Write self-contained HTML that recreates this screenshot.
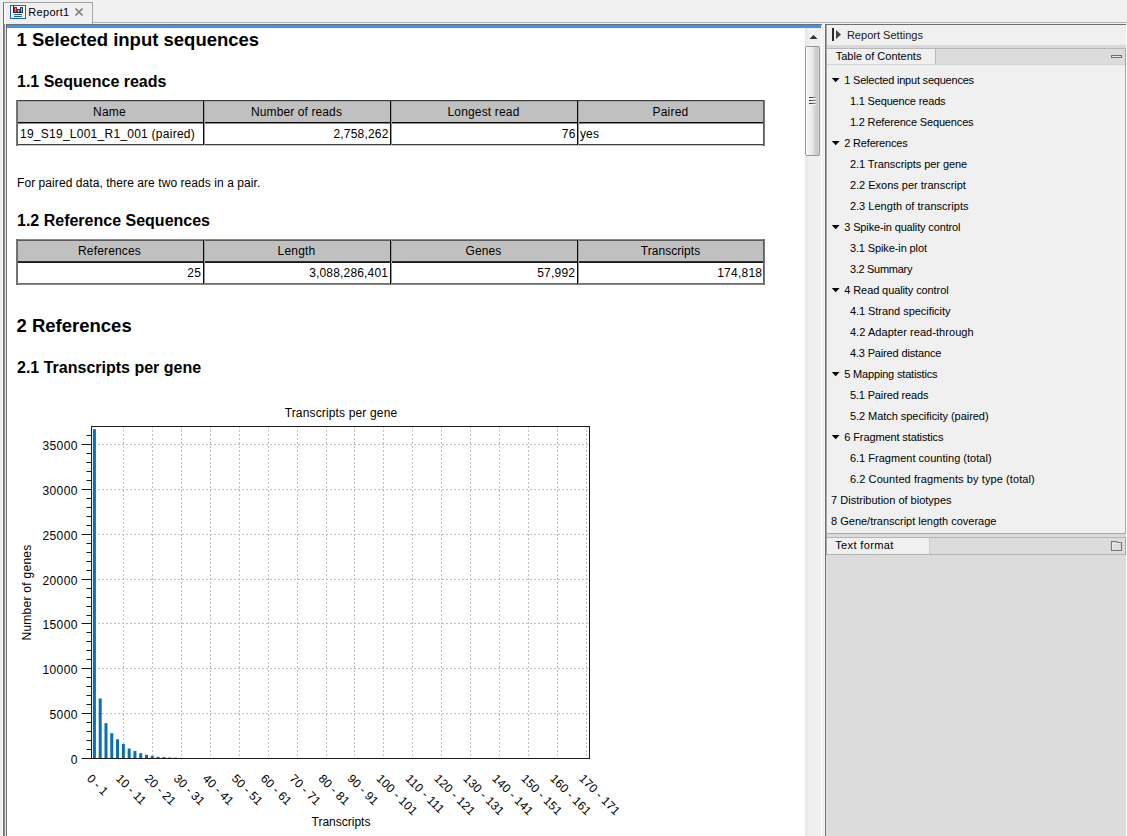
<!DOCTYPE html>
<html><head><meta charset="utf-8">
<style>
*{margin:0;padding:0;box-sizing:border-box}
html,body{width:1127px;height:836px;overflow:hidden;background:#f0f0f0;font-family:"Liberation Sans",sans-serif;position:relative}
.a{position:absolute}
.t{position:absolute;white-space:nowrap;line-height:1}
svg{position:absolute;left:0;top:0}
</style></head><body>
<div class="a" style="left:93px;top:22px;width:1034px;height:1px;background:#b4b4b4;"></div>
<div class="a" style="left:3px;top:2px;width:90px;height:22px;background:#f0f0f0;border-top:1px solid #a0a0a0;border-left:1px solid #6e6e6e;border-right:1px solid #a8a8a8"></div>
<div class="a" style="left:4px;top:3px;width:1px;height:21px;background:#fafafa;"></div>
<svg width="1127" height="30" style="left:0;top:0" shape-rendering="crispEdges">
<rect x="10" y="5" width="16" height="14" fill="#1e62b2"/>
<rect x="11" y="6" width="14" height="12" fill="#f6faff"/>
<rect x="13" y="6" width="1" height="7" fill="#26245e"/>
<rect x="13" y="12" width="10" height="1" fill="#26245e"/>
<rect x="14" y="7" width="3" height="5" fill="#b01e18"/>
<rect x="15" y="8" width="1" height="4" fill="#f07a64"/>
<rect x="17" y="9" width="3" height="3" fill="#0e7a12"/>
<rect x="18" y="10" width="1" height="2" fill="#90f070"/>
<rect x="20" y="7" width="3" height="5" fill="#1c3c98"/>
<rect x="21" y="8" width="1" height="4" fill="#78a8e8"/>
<rect x="14" y="14" width="8" height="1" fill="#1a62b4"/>
<rect x="14" y="16" width="8" height="1" fill="#1a62b4"/>
</svg>
<svg width="1127" height="30" style="left:0;top:0">
<path d="M75.5 8.5 L82.5 15.5 M82.5 8.5 L75.5 15.5" stroke="#7a7a7a" stroke-width="1.6"/>
</svg>
<div class="t" style="top:6.69px;font-size:11px;color:#000;letter-spacing:0.3px;left:28.30px;">Report1</div>
<div class="a" style="left:2px;top:24px;width:1px;height:812px;background:#f8f8f8;"></div>
<div class="a" style="left:3px;top:24px;width:1px;height:812px;background:#6e6e6e;"></div>
<div class="a" style="left:4px;top:24px;width:1px;height:812px;background:#8c8c8c;"></div>
<div class="a" style="left:5px;top:24px;width:1px;height:812px;background:#e4e4e4;"></div>
<div class="a" style="left:6px;top:24px;width:816px;height:1px;background:#6e6e6e;"></div>
<div class="a" style="left:6px;top:24px;width:1px;height:812px;background:#6e6e6e;"></div>
<div class="a" style="left:7px;top:25px;width:814px;height:3px;background:#3797f7;"></div>
<div class="a" style="left:2px;top:22px;width:1px;height:2px;background:#f0f0f0;"></div>
<div class="a" style="left:7px;top:28px;width:798px;height:808px;background:#ffffff;"></div>
<div class="a" style="left:805px;top:28px;width:15px;height:808px;background:linear-gradient(to right,#e6e6e6,#f0f0f0 30%,#f0f0f0);"></div>
<div class="a" style="left:820px;top:28px;width:5px;height:808px;background:#f0f0f0;"></div>
<div class="a" style="left:821px;top:28px;width:1px;height:808px;background:#ffffff;"></div>
<div class="a" style="left:824px;top:25px;width:1px;height:811px;background:#f8f8f8;"></div>
<div class="a" style="left:805px;top:46px;width:15px;height:110px;background:linear-gradient(to right,#f6f6f6 0%,#ececee 45%,#d2d2d6 70%,#c8c8cc 90%,#dcdcdc 100%);border:1px solid #959595;border-radius:2px"></div>
<div class="a" style="left:806px;top:47px;width:1px;height:108px;background:#fbfbfb;"></div>
<div class="a" style="left:809px;top:97px;width:7px;height:1px;background:linear-gradient(to right,#303030,#606060 50%,#a0a0a0);"></div>
<div class="a" style="left:809px;top:98px;width:7px;height:1px;background:#f6f6f6;"></div>
<div class="a" style="left:809px;top:100px;width:7px;height:1px;background:linear-gradient(to right,#303030,#606060 50%,#a0a0a0);"></div>
<div class="a" style="left:809px;top:101px;width:7px;height:1px;background:#f6f6f6;"></div>
<div class="a" style="left:809px;top:103px;width:7px;height:1px;background:linear-gradient(to right,#303030,#606060 50%,#a0a0a0);"></div>
<div class="a" style="left:809px;top:104px;width:7px;height:1px;background:#f6f6f6;"></div>
<div class="t" style="top:31.14px;font-size:18.5px;color:#000;font-weight:bold;left:16.50px;">1 Selected input sequences</div>
<div class="t" style="top:74.36px;font-size:16px;color:#000;font-weight:bold;left:17.00px;">1.1 Sequence reads</div>
<div class="t" style="top:176.54px;font-size:12px;color:#000;letter-spacing:0.068px;left:17.00px;">For paired data, there are two reads in a pair.</div>
<div class="t" style="top:213.16px;font-size:16px;color:#000;font-weight:bold;left:17.00px;">1.2 Reference Sequences</div>
<div class="t" style="top:317.44px;font-size:18.5px;color:#000;font-weight:bold;left:16.50px;">2 References</div>
<div class="t" style="top:360.46px;font-size:16px;color:#000;font-weight:bold;left:17.00px;">2.1 Transcripts per gene</div>
<div class="a" style="left:17px;top:101px;width:747px;height:21px;background:#c0c0c0;"></div>
<div class="a" style="left:17px;top:123px;width:747px;height:21px;background:#ffffff;"></div>
<div class="a" style="left:16px;top:100px;width:749px;height:1px;background:#3c3c3c;"></div>
<div class="a" style="left:16px;top:101px;width:749px;height:1px;background:#a8a8a8;"></div>
<div class="a" style="left:16px;top:144px;width:749px;height:1px;background:#404040;"></div>
<div class="a" style="left:16px;top:145px;width:749px;height:1px;background:#c4c4c4;"></div>
<div class="a" style="left:17px;top:122px;width:747px;height:1px;background:#0a0a0a;"></div>
<div class="a" style="left:17px;top:123px;width:747px;height:1px;background:#8c8c8c;"></div>
<div class="a" style="left:16px;top:100px;width:1px;height:46px;background:#767676;"></div>
<div class="a" style="left:17px;top:100px;width:1px;height:46px;background:#6a6a6a;"></div>
<div class="a" style="left:763px;top:100px;width:1px;height:46px;background:#606060;"></div>
<div class="a" style="left:764px;top:100px;width:1px;height:46px;background:#787878;"></div>
<div class="a" style="left:203px;top:101px;width:1px;height:44px;background:#0a0a0a;"></div>
<div class="a" style="left:204px;top:101px;width:1px;height:44px;background:#9a9a9a;"></div>
<div class="a" style="left:390px;top:101px;width:1px;height:44px;background:#0a0a0a;"></div>
<div class="a" style="left:391px;top:101px;width:1px;height:44px;background:#9a9a9a;"></div>
<div class="a" style="left:577px;top:101px;width:1px;height:44px;background:#0a0a0a;"></div>
<div class="a" style="left:578px;top:101px;width:1px;height:44px;background:#9a9a9a;"></div>
<div class="t" style="top:105.84px;font-size:12px;color:#000;letter-spacing:0.248px;left:-190.50px;width:600px;text-align:center;">Name</div>
<div class="t" style="top:105.84px;font-size:12px;color:#000;letter-spacing:0.108px;left:-3.50px;width:600px;text-align:center;">Number of reads</div>
<div class="t" style="top:105.84px;font-size:12px;color:#000;letter-spacing:0.162px;left:183.50px;width:600px;text-align:center;">Longest read</div>
<div class="t" style="top:105.84px;font-size:12px;color:#000;letter-spacing:0.219px;left:370.50px;width:600px;text-align:center;">Paired</div>
<div class="t" style="top:127.84px;font-size:12px;color:#000;letter-spacing:0.254px;left:20.00px;">19_S19_L001_R1_001 (paired)</div>
<div class="t" style="top:127.84px;font-size:12px;color:#000;letter-spacing:0.179px;right:738.52px;">2,758,262</div>
<div class="t" style="top:127.84px;font-size:12px;color:#000;letter-spacing:0.326px;right:551.37px;">76</div>
<div class="t" style="top:127.84px;font-size:12px;color:#000;letter-spacing:0.109px;left:580.00px;">yes</div>
<div class="a" style="left:17px;top:241px;width:747px;height:21px;background:#c0c0c0;"></div>
<div class="a" style="left:17px;top:263px;width:747px;height:21px;background:#ffffff;"></div>
<div class="a" style="left:16px;top:239px;width:749px;height:1px;background:#8a8a8a;"></div>
<div class="a" style="left:16px;top:240px;width:749px;height:1px;background:#5c5c5c;"></div>
<div class="a" style="left:16px;top:283px;width:749px;height:1px;background:#707070;"></div>
<div class="a" style="left:16px;top:284px;width:749px;height:1px;background:#858585;"></div>
<div class="a" style="left:17px;top:261px;width:747px;height:1px;background:#303030;"></div>
<div class="a" style="left:17px;top:262px;width:747px;height:1px;background:#1a1a1a;"></div>
<div class="a" style="left:16px;top:239px;width:1px;height:46px;background:#767676;"></div>
<div class="a" style="left:17px;top:239px;width:1px;height:46px;background:#6a6a6a;"></div>
<div class="a" style="left:763px;top:239px;width:1px;height:46px;background:#606060;"></div>
<div class="a" style="left:764px;top:239px;width:1px;height:46px;background:#787878;"></div>
<div class="a" style="left:203px;top:240px;width:1px;height:44px;background:#0a0a0a;"></div>
<div class="a" style="left:204px;top:240px;width:1px;height:44px;background:#9a9a9a;"></div>
<div class="a" style="left:390px;top:240px;width:1px;height:44px;background:#0a0a0a;"></div>
<div class="a" style="left:391px;top:240px;width:1px;height:44px;background:#9a9a9a;"></div>
<div class="a" style="left:577px;top:240px;width:1px;height:44px;background:#0a0a0a;"></div>
<div class="a" style="left:578px;top:240px;width:1px;height:44px;background:#9a9a9a;"></div>
<div class="t" style="top:245.24px;font-size:12px;color:#000;letter-spacing:0.163px;left:-190.50px;width:600px;text-align:center;">References</div>
<div class="t" style="top:245.24px;font-size:12px;color:#000;letter-spacing:0.216px;left:-3.50px;width:600px;text-align:center;">Length</div>
<div class="t" style="top:245.24px;font-size:12px;color:#000;letter-spacing:0.129px;left:183.50px;width:600px;text-align:center;">Genes</div>
<div class="t" style="top:245.24px;font-size:12px;color:#000;letter-spacing:0.06px;left:370.50px;width:600px;text-align:center;">Transcripts</div>
<div class="t" style="top:267.24px;font-size:12px;color:#000;letter-spacing:0.326px;right:925.67px;">25</div>
<div class="t" style="top:267.24px;font-size:12px;color:#000;letter-spacing:0.174px;right:738.83px;">3,088,286,401</div>
<div class="t" style="top:267.24px;font-size:12px;color:#000;letter-spacing:0.216px;right:551.78px;">57,992</div>
<div class="t" style="top:267.24px;font-size:12px;color:#000;letter-spacing:0.232px;right:364.77px;">174,818</div>
<svg width="1127" height="836" style="left:0;top:0" font-family="Liberation Sans">
<line x1="123.5" y1="426" x2="123.5" y2="758.5" stroke="#c0c0c0" stroke-width="1" stroke-dasharray="2,2"/>
<line x1="152.5" y1="426" x2="152.5" y2="758.5" stroke="#c0c0c0" stroke-width="1" stroke-dasharray="2,2"/>
<line x1="181.5" y1="426" x2="181.5" y2="758.5" stroke="#c0c0c0" stroke-width="1" stroke-dasharray="2,2"/>
<line x1="210.5" y1="426" x2="210.5" y2="758.5" stroke="#c0c0c0" stroke-width="1" stroke-dasharray="2,2"/>
<line x1="239.5" y1="426" x2="239.5" y2="758.5" stroke="#c0c0c0" stroke-width="1" stroke-dasharray="2,2"/>
<line x1="268.5" y1="426" x2="268.5" y2="758.5" stroke="#c0c0c0" stroke-width="1" stroke-dasharray="2,2"/>
<line x1="297.5" y1="426" x2="297.5" y2="758.5" stroke="#c0c0c0" stroke-width="1" stroke-dasharray="2,2"/>
<line x1="326.5" y1="426" x2="326.5" y2="758.5" stroke="#c0c0c0" stroke-width="1" stroke-dasharray="2,2"/>
<line x1="354.5" y1="426" x2="354.5" y2="758.5" stroke="#c0c0c0" stroke-width="1" stroke-dasharray="2,2"/>
<line x1="383.5" y1="426" x2="383.5" y2="758.5" stroke="#c0c0c0" stroke-width="1" stroke-dasharray="2,2"/>
<line x1="412.5" y1="426" x2="412.5" y2="758.5" stroke="#c0c0c0" stroke-width="1" stroke-dasharray="2,2"/>
<line x1="441.5" y1="426" x2="441.5" y2="758.5" stroke="#c0c0c0" stroke-width="1" stroke-dasharray="2,2"/>
<line x1="470.5" y1="426" x2="470.5" y2="758.5" stroke="#c0c0c0" stroke-width="1" stroke-dasharray="2,2"/>
<line x1="499.5" y1="426" x2="499.5" y2="758.5" stroke="#c0c0c0" stroke-width="1" stroke-dasharray="2,2"/>
<line x1="528.5" y1="426" x2="528.5" y2="758.5" stroke="#c0c0c0" stroke-width="1" stroke-dasharray="2,2"/>
<line x1="557.5" y1="426" x2="557.5" y2="758.5" stroke="#c0c0c0" stroke-width="1" stroke-dasharray="2,2"/>
<line x1="586.5" y1="426" x2="586.5" y2="758.5" stroke="#c0c0c0" stroke-width="1" stroke-dasharray="2,2"/>
<line x1="94" y1="713.5" x2="589.5" y2="713.5" stroke="#c0c0c0" stroke-width="1" stroke-dasharray="2,2"/>
<line x1="94" y1="668.5" x2="589.5" y2="668.5" stroke="#c0c0c0" stroke-width="1" stroke-dasharray="2,2"/>
<line x1="94" y1="623.5" x2="589.5" y2="623.5" stroke="#c0c0c0" stroke-width="1" stroke-dasharray="2,2"/>
<line x1="94" y1="579.5" x2="589.5" y2="579.5" stroke="#c0c0c0" stroke-width="1" stroke-dasharray="2,2"/>
<line x1="94" y1="534.5" x2="589.5" y2="534.5" stroke="#c0c0c0" stroke-width="1" stroke-dasharray="2,2"/>
<line x1="94" y1="489.5" x2="589.5" y2="489.5" stroke="#c0c0c0" stroke-width="1" stroke-dasharray="2,2"/>
<line x1="94" y1="444.5" x2="589.5" y2="444.5" stroke="#c0c0c0" stroke-width="1" stroke-dasharray="2,2"/>
<rect x="92.90" y="429.20" width="3" height="329.30" fill="#0a6eb4"/>
<rect x="98.69" y="698.50" width="3" height="60.00" fill="#0a6eb4"/>
<rect x="104.48" y="723.20" width="3" height="35.30" fill="#0a6eb4"/>
<rect x="110.27" y="733.20" width="3" height="25.30" fill="#0a6eb4"/>
<rect x="116.06" y="739.30" width="3" height="19.20" fill="#0a6eb4"/>
<rect x="121.85" y="744.00" width="3" height="14.50" fill="#0a6eb4"/>
<rect x="127.64" y="748.50" width="3" height="10.00" fill="#0a6eb4"/>
<rect x="133.43" y="751.00" width="3" height="7.50" fill="#0a6eb4"/>
<rect x="139.22" y="753.20" width="3" height="5.30" fill="#0a6eb4"/>
<rect x="145.01" y="754.80" width="3" height="3.70" fill="#0a6eb4"/>
<rect x="150.80" y="755.90" width="3" height="2.60" fill="#0a6eb4"/>
<rect x="156.59" y="756.80" width="3" height="1.70" fill="#0a6eb4"/>
<rect x="162.38" y="757.10" width="3" height="1.40" fill="#0a6eb4"/>
<rect x="168.17" y="757.50" width="3" height="1.00" fill="#0a6eb4"/>
<rect x="173.97" y="757.70" width="3" height="0.80" fill="#0a6eb4"/>
<rect x="179.76" y="757.90" width="3" height="0.60" fill="#0a6eb4"/>
<rect x="185.55" y="758.00" width="3" height="0.50" fill="#0a6eb4"/>
<rect x="191.34" y="758.10" width="3" height="0.40" fill="#0a6eb4"/>
<rect x="91.5" y="426.5" width="498.0" height="332.0" fill="none" stroke="#1a1a1a" stroke-width="1"/>
<line x1="81.5" y1="758.5" x2="91.5" y2="758.5" stroke="#1a1a1a" stroke-width="1"/>
<text x="77.8" y="763.80" font-size="12" text-anchor="end" letter-spacing="0.4">0</text>
<line x1="86.5" y1="749.5" x2="91.5" y2="749.5" stroke="#1a1a1a" stroke-width="1"/>
<line x1="86.5" y1="740.5" x2="91.5" y2="740.5" stroke="#1a1a1a" stroke-width="1"/>
<line x1="86.5" y1="731.5" x2="91.5" y2="731.5" stroke="#1a1a1a" stroke-width="1"/>
<line x1="86.5" y1="722.5" x2="91.5" y2="722.5" stroke="#1a1a1a" stroke-width="1"/>
<line x1="81.5" y1="713.5" x2="91.5" y2="713.5" stroke="#1a1a1a" stroke-width="1"/>
<text x="77.8" y="718.80" font-size="12" text-anchor="end" letter-spacing="0.4">5000</text>
<line x1="86.5" y1="704.5" x2="91.5" y2="704.5" stroke="#1a1a1a" stroke-width="1"/>
<line x1="86.5" y1="695.5" x2="91.5" y2="695.5" stroke="#1a1a1a" stroke-width="1"/>
<line x1="86.5" y1="686.5" x2="91.5" y2="686.5" stroke="#1a1a1a" stroke-width="1"/>
<line x1="86.5" y1="677.5" x2="91.5" y2="677.5" stroke="#1a1a1a" stroke-width="1"/>
<line x1="81.5" y1="668.5" x2="91.5" y2="668.5" stroke="#1a1a1a" stroke-width="1"/>
<text x="77.8" y="673.80" font-size="12" text-anchor="end" letter-spacing="0.4">10000</text>
<line x1="86.5" y1="659.5" x2="91.5" y2="659.5" stroke="#1a1a1a" stroke-width="1"/>
<line x1="86.5" y1="650.5" x2="91.5" y2="650.5" stroke="#1a1a1a" stroke-width="1"/>
<line x1="86.5" y1="641.5" x2="91.5" y2="641.5" stroke="#1a1a1a" stroke-width="1"/>
<line x1="86.5" y1="632.5" x2="91.5" y2="632.5" stroke="#1a1a1a" stroke-width="1"/>
<line x1="81.5" y1="623.5" x2="91.5" y2="623.5" stroke="#1a1a1a" stroke-width="1"/>
<text x="77.8" y="628.80" font-size="12" text-anchor="end" letter-spacing="0.4">15000</text>
<line x1="86.5" y1="615.5" x2="91.5" y2="615.5" stroke="#1a1a1a" stroke-width="1"/>
<line x1="86.5" y1="606.5" x2="91.5" y2="606.5" stroke="#1a1a1a" stroke-width="1"/>
<line x1="86.5" y1="597.5" x2="91.5" y2="597.5" stroke="#1a1a1a" stroke-width="1"/>
<line x1="86.5" y1="588.5" x2="91.5" y2="588.5" stroke="#1a1a1a" stroke-width="1"/>
<line x1="81.5" y1="579.5" x2="91.5" y2="579.5" stroke="#1a1a1a" stroke-width="1"/>
<text x="77.8" y="584.80" font-size="12" text-anchor="end" letter-spacing="0.4">20000</text>
<line x1="86.5" y1="570.5" x2="91.5" y2="570.5" stroke="#1a1a1a" stroke-width="1"/>
<line x1="86.5" y1="561.5" x2="91.5" y2="561.5" stroke="#1a1a1a" stroke-width="1"/>
<line x1="86.5" y1="552.5" x2="91.5" y2="552.5" stroke="#1a1a1a" stroke-width="1"/>
<line x1="86.5" y1="543.5" x2="91.5" y2="543.5" stroke="#1a1a1a" stroke-width="1"/>
<line x1="81.5" y1="534.5" x2="91.5" y2="534.5" stroke="#1a1a1a" stroke-width="1"/>
<text x="77.8" y="539.80" font-size="12" text-anchor="end" letter-spacing="0.4">25000</text>
<line x1="86.5" y1="525.5" x2="91.5" y2="525.5" stroke="#1a1a1a" stroke-width="1"/>
<line x1="86.5" y1="516.5" x2="91.5" y2="516.5" stroke="#1a1a1a" stroke-width="1"/>
<line x1="86.5" y1="507.5" x2="91.5" y2="507.5" stroke="#1a1a1a" stroke-width="1"/>
<line x1="86.5" y1="498.5" x2="91.5" y2="498.5" stroke="#1a1a1a" stroke-width="1"/>
<line x1="81.5" y1="489.5" x2="91.5" y2="489.5" stroke="#1a1a1a" stroke-width="1"/>
<text x="77.8" y="494.80" font-size="12" text-anchor="end" letter-spacing="0.4">30000</text>
<line x1="86.5" y1="480.5" x2="91.5" y2="480.5" stroke="#1a1a1a" stroke-width="1"/>
<line x1="86.5" y1="471.5" x2="91.5" y2="471.5" stroke="#1a1a1a" stroke-width="1"/>
<line x1="86.5" y1="462.5" x2="91.5" y2="462.5" stroke="#1a1a1a" stroke-width="1"/>
<line x1="86.5" y1="453.5" x2="91.5" y2="453.5" stroke="#1a1a1a" stroke-width="1"/>
<line x1="81.5" y1="444.5" x2="91.5" y2="444.5" stroke="#1a1a1a" stroke-width="1"/>
<text x="77.8" y="449.80" font-size="12" text-anchor="end" letter-spacing="0.4">35000</text>
<line x1="86.5" y1="435.5" x2="91.5" y2="435.5" stroke="#1a1a1a" stroke-width="1"/>
<text transform="translate(92.40,773) rotate(45)" x="0" y="0" font-size="12" letter-spacing="-0.002" dominant-baseline="hanging">0 - 1</text>
<text transform="translate(121.35,773) rotate(45)" x="0" y="0" font-size="12" letter-spacing="0.092" dominant-baseline="hanging">10 - 11</text>
<text transform="translate(150.30,773) rotate(45)" x="0" y="0" font-size="12" letter-spacing="0.092" dominant-baseline="hanging">20 - 21</text>
<text transform="translate(179.26,773) rotate(45)" x="0" y="0" font-size="12" letter-spacing="0.092" dominant-baseline="hanging">30 - 31</text>
<text transform="translate(208.21,773) rotate(45)" x="0" y="0" font-size="12" letter-spacing="0.092" dominant-baseline="hanging">40 - 41</text>
<text transform="translate(237.16,773) rotate(45)" x="0" y="0" font-size="12" letter-spacing="0.092" dominant-baseline="hanging">50 - 51</text>
<text transform="translate(266.12,773) rotate(45)" x="0" y="0" font-size="12" letter-spacing="0.092" dominant-baseline="hanging">60 - 61</text>
<text transform="translate(295.07,773) rotate(45)" x="0" y="0" font-size="12" letter-spacing="0.092" dominant-baseline="hanging">70 - 71</text>
<text transform="translate(324.02,773) rotate(45)" x="0" y="0" font-size="12" letter-spacing="0.092" dominant-baseline="hanging">80 - 81</text>
<text transform="translate(352.98,773) rotate(45)" x="0" y="0" font-size="12" letter-spacing="0.092" dominant-baseline="hanging">90 - 91</text>
<text transform="translate(381.93,773) rotate(45)" x="0" y="0" font-size="12" letter-spacing="0.144" dominant-baseline="hanging">100 - 101</text>
<text transform="translate(410.88,773) rotate(45)" x="0" y="0" font-size="12" letter-spacing="0.144" dominant-baseline="hanging">110 - 111</text>
<text transform="translate(439.84,773) rotate(45)" x="0" y="0" font-size="12" letter-spacing="0.144" dominant-baseline="hanging">120 - 121</text>
<text transform="translate(468.79,773) rotate(45)" x="0" y="0" font-size="12" letter-spacing="0.144" dominant-baseline="hanging">130 - 131</text>
<text transform="translate(497.74,773) rotate(45)" x="0" y="0" font-size="12" letter-spacing="0.144" dominant-baseline="hanging">140 - 141</text>
<text transform="translate(526.70,773) rotate(45)" x="0" y="0" font-size="12" letter-spacing="0.144" dominant-baseline="hanging">150 - 151</text>
<text transform="translate(555.65,773) rotate(45)" x="0" y="0" font-size="12" letter-spacing="0.144" dominant-baseline="hanging">160 - 161</text>
<text transform="translate(584.60,773) rotate(45)" x="0" y="0" font-size="12" letter-spacing="0.144" dominant-baseline="hanging">170 - 171</text>
<text x="341" y="417.1" font-size="12" text-anchor="middle" letter-spacing="0.15">Transcripts per gene</text>
<text x="341" y="826" font-size="12" text-anchor="middle">Transcripts</text>
<text transform="translate(30.8,592.5) rotate(-90)" x="0" y="0" font-size="12" text-anchor="middle" letter-spacing="0.27">Number of genes</text>
</svg>
<div class="a" style="left:825px;top:24px;width:301px;height:812px;background:#dcdcdc;"></div>
<div class="a" style="left:1126px;top:23px;width:1px;height:813px;background:#fcfcfc;"></div>
<div class="a" style="left:825px;top:24px;width:301px;height:1px;background:#6e6e6e;"></div>
<div class="a" style="left:825px;top:24px;width:1px;height:812px;background:#6e6e6e;"></div>
<div class="a" style="left:826px;top:25px;width:300px;height:20px;background:#f0f0f0;"></div>
<div class="a" style="left:826px;top:45px;width:300px;height:3px;background:#d8d8d8;"></div>
<div class="a" style="left:826px;top:48px;width:300px;height:486px;background:#f0f0f0;border-top:1px solid #b8b8b8;border-right:1px solid #a8a8a8;border-bottom:1px solid #a8a8a8;border-bottom-right-radius:1px"></div>
<div class="a" style="left:826px;top:49px;width:299px;height:15px;background:#dcdcdc;"></div>
<div class="a" style="left:826px;top:49px;width:109px;height:15px;background:#f0f0f0;"></div>
<div class="a" style="left:935px;top:49px;width:1px;height:15px;background:#b8b8b8;"></div>
<div class="a" style="left:826px;top:64px;width:299px;height:1px;background:#d4d4d4;"></div>
<div class="a" style="left:1111px;top:55px;width:11px;height:3px;background:#e8e8e8;border:1px solid #707070"></div>
<div class="a" style="left:826px;top:537px;width:300px;height:18px;background:#dcdcdc;border-top:1px solid #b4b4b4;border-right:1px solid #a8a8a8;border-bottom:1px solid #b4b4b4"></div>
<div class="a" style="left:826px;top:538px;width:103px;height:16px;background:#f0f0f0;"></div>
<div class="a" style="left:929px;top:538px;width:1px;height:16px;background:#d0d0d0;"></div>
<div class="a" style="left:826px;top:25px;width:1px;height:530px;background:#a8a8a8;"></div>
<div class="a" style="left:826px;top:555px;width:1px;height:281px;background:#e4e4e4;"></div>
<svg width="1127" height="836" style="left:0;top:0"><path d="M1111.5 550.5 V541.5 H1116.5 L1117.5 542.5 H1121.5 V550.5 Z" fill="#dcdcdc" stroke="#7a7a7a" stroke-width="1.2"/><path d="M1112.5 549.5 V543.5 H1120.5" fill="none" stroke="#ececec" stroke-width="1"/><rect x="832" y="28" width="2" height="13" fill="#2c2c2c"/><path d="M836 30 L841 34.5 L836 39 Z" fill="#444"/><path d="M813.5 35 L817.5 39 H809.5 Z" fill="#303030"/></svg>
<div class="t" style="top:74.69px;font-size:11px;color:#000;letter-spacing:-0.214px;left:844.30px;">1 Selected input sequences</div>
<svg width="10" height="6" style="left:831px;top:78px"><path d="M0.8 0 H8.6 L4.7 4.2 Z" fill="#000"/></svg>
<div class="t" style="top:95.69px;font-size:11px;color:#000;letter-spacing:-0.163px;left:849.90px;">1.1 Sequence reads</div>
<div class="t" style="top:116.69px;font-size:11px;color:#000;letter-spacing:-0.159px;left:849.90px;">1.2 Reference Sequences</div>
<div class="t" style="top:137.69px;font-size:11px;color:#000;letter-spacing:-0.184px;left:844.30px;">2 References</div>
<svg width="10" height="6" style="left:831px;top:141px"><path d="M0.8 0 H8.6 L4.7 4.2 Z" fill="#000"/></svg>
<div class="t" style="top:158.69px;font-size:11px;color:#000;letter-spacing:-0.057px;left:849.90px;">2.1 Transcripts per gene</div>
<div class="t" style="top:179.69px;font-size:11px;color:#000;letter-spacing:-0.007px;left:849.90px;">2.2 Exons per transcript</div>
<div class="t" style="top:200.69px;font-size:11px;color:#000;letter-spacing:0.024px;left:849.90px;">2.3 Length of transcripts</div>
<div class="t" style="top:221.69px;font-size:11px;color:#000;letter-spacing:-0.146px;left:844.30px;">3 Spike-in quality control</div>
<svg width="10" height="6" style="left:831px;top:225px"><path d="M0.8 0 H8.6 L4.7 4.2 Z" fill="#000"/></svg>
<div class="t" style="top:242.69px;font-size:11px;color:#000;letter-spacing:-0.111px;left:849.90px;">3.1 Spike-in plot</div>
<div class="t" style="top:263.69px;font-size:11px;color:#000;letter-spacing:-0.291px;left:849.90px;">3.2 Summary</div>
<div class="t" style="top:284.69px;font-size:11px;color:#000;letter-spacing:-0.1px;left:844.30px;">4 Read quality control</div>
<svg width="10" height="6" style="left:831px;top:288px"><path d="M0.8 0 H8.6 L4.7 4.2 Z" fill="#000"/></svg>
<div class="t" style="top:305.69px;font-size:11px;color:#000;letter-spacing:-0.047px;left:849.90px;">4.1 Strand specificity</div>
<div class="t" style="top:326.69px;font-size:11px;color:#000;letter-spacing:0.064px;left:849.90px;">4.2 Adapter read-through</div>
<div class="t" style="top:347.69px;font-size:11px;color:#000;letter-spacing:-0.148px;left:849.90px;">4.3 Paired distance</div>
<div class="t" style="top:368.69px;font-size:11px;color:#000;letter-spacing:-0.179px;left:844.30px;">5 Mapping statistics</div>
<svg width="10" height="6" style="left:831px;top:372px"><path d="M0.8 0 H8.6 L4.7 4.2 Z" fill="#000"/></svg>
<div class="t" style="top:389.69px;font-size:11px;color:#000;letter-spacing:-0.141px;left:849.90px;">5.1 Paired reads</div>
<div class="t" style="top:410.69px;font-size:11px;color:#000;letter-spacing:-0.045px;left:849.90px;">5.2 Match specificity (paired)</div>
<div class="t" style="top:431.69px;font-size:11px;color:#000;letter-spacing:-0.114px;left:844.30px;">6 Fragment statistics</div>
<svg width="10" height="6" style="left:831px;top:435px"><path d="M0.8 0 H8.6 L4.7 4.2 Z" fill="#000"/></svg>
<div class="t" style="top:452.69px;font-size:11px;color:#000;letter-spacing:0.016px;left:849.90px;">6.1 Fragment counting (total)</div>
<div class="t" style="top:473.69px;font-size:11px;color:#000;letter-spacing:0.089px;left:849.90px;">6.2 Counted fragments by type (total)</div>
<div class="t" style="top:494.69px;font-size:11px;color:#000;letter-spacing:0.002px;left:831.10px;">7 Distribution of biotypes</div>
<div class="t" style="top:515.69px;font-size:11px;color:#000;letter-spacing:-0.013px;left:831.10px;">8 Gene/transcript length coverage</div>
<div class="t" style="top:29.89px;font-size:11px;color:#202020;letter-spacing:0.02px;left:846.90px;">Report Settings</div>
<div class="t" style="top:51.39px;font-size:11px;color:#000;letter-spacing:0.006px;left:835.70px;">Table of Contents</div>
<div class="t" style="top:539.79px;font-size:11px;color:#000;letter-spacing:0.37px;left:835.20px;">Text format</div>
</body></html>
